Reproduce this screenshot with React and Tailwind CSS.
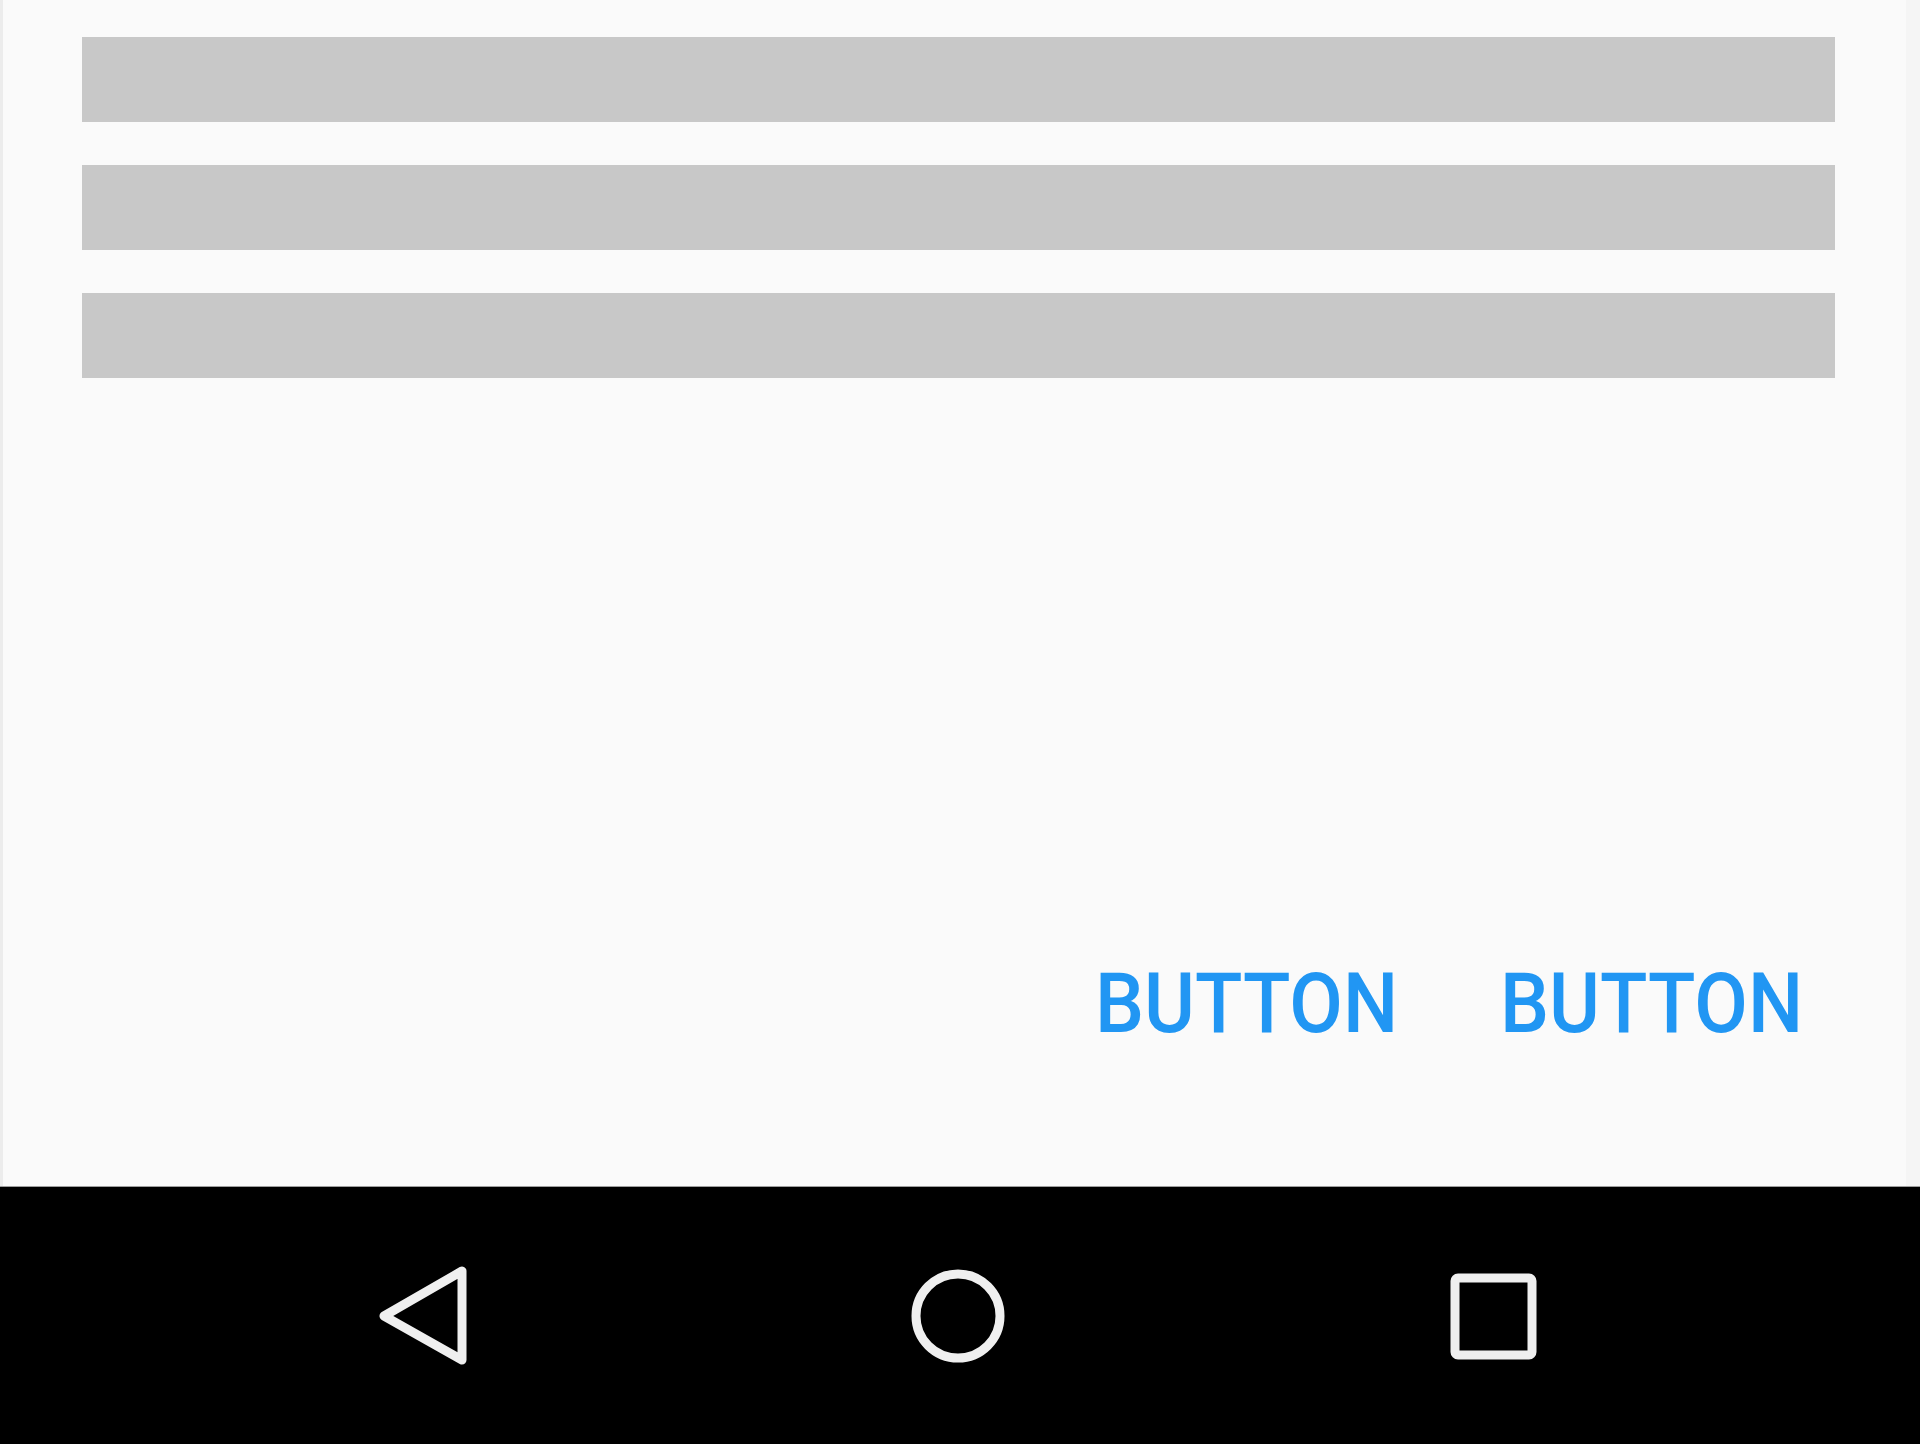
import React from 'react';

const Bar = () => <div className="h-[85px] bg-[#c8c8c8]" />;

const NavButton = ({ children }) => (
  <div className="w-[535px] flex items-center justify-center">
    <svg width="110" height="110" viewBox="-55 -55 110 110" fill="none" stroke="#efefef" strokeLinejoin="round" strokeLinecap="round">
      {children}
    </svg>
  </div>
);

const TextButton = ({ label }) => (
  <span className="w-[304px] block">
    <span className="inline-block origin-left scale-x-[0.926] whitespace-nowrap">{label}</span>
  </span>
);

export default function App() {
  return (
    <div className="w-[1920px] h-[1444px] flex flex-col bg-black" style={{ fontFamily: 'Roboto, "Liberation Sans", sans-serif' }}>
      <div className="h-[1186px] bg-[#fafafa] border-l-[3px] border-l-[#ececec] border-r-[14px] border-r-[#f5f5f5] flex flex-col">
        <div className="pl-[79px] pr-[71px] pt-[37px] flex flex-col gap-[43px]">
          <Bar />
          <Bar />
          <Bar />
        </div>
        <div className="mt-[584px] flex justify-end gap-[101px] pr-[102px] text-[84px] leading-none font-medium text-[#2196f3]">
          <TextButton label="BUTTON" />
          <TextButton label="BUTTON" />
        </div>
      </div>
      <div className="h-px bg-[#9e9e9e]" />
      <div className="flex-1 flex items-center justify-center pr-[5px]">
        <NavButton>
          <path d="M-39 0 L39 -45 L39 44 Z" strokeWidth="9" />
        </NavButton>
        <NavButton>
          <circle cx="0" cy="0" r="42" strokeWidth="9" />
        </NavButton>
        <NavButton>
          <rect x="-38" y="-38" width="77" height="77" rx="3" strokeWidth="9" />
        </NavButton>
      </div>
    </div>
  );
}
